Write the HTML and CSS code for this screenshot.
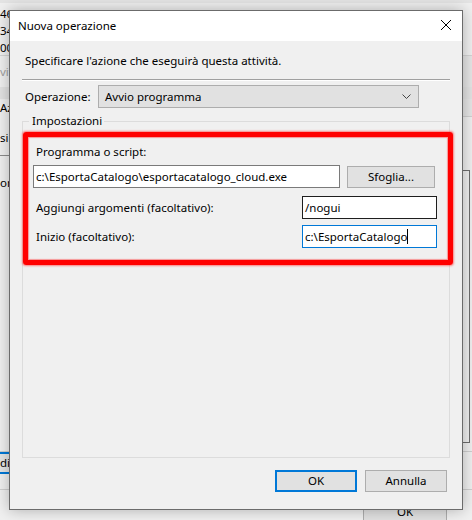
FILE: index.html
```html
<!DOCTYPE html>
<html lang="it">
<head>
    <meta charset="UTF-8">
    <meta name="viewport" content="width=device-width, initial-scale=1.0">
    <title>Nuova operazione</title>
    <link rel="stylesheet" href="styles.css">
</head>
<body>
    <!-- finestra sottostante (Utilità di pianificazione) -->
    <div class="backdrop">
        <div class="bg-band"></div>
        <div class="bg-row bg-first">46&nbsp;&nbsp;&nbsp;&nbsp;&nbsp;Alle 7:15 ogni giorno - Dopo l'attivazione, ripeti ogni 1 ora</div>
        <div class="bg-row">34</div>
        <div class="bg-row">00</div>
        <div class="bg-line"></div>
        <div class="bg-split bg-h31">
            <div class="bg-text bg-muted">vit</div>
            <div class="bg-edge bg-edge-gray"></div>
        </div>
        <div class="bg-band bg-h12"></div>
        <div class="bg-split bg-h18">
            <div class="bg-text">Az</div>
            <div class="bg-edge bg-edge-gray bg-edge-under"></div>
        </div>
        <div class="bg-split bg-h30">
            <div class="bg-text bg-bottom">si</div>
        </div>
        <div class="bg-gap9"></div>
        <div class="bg-line bg-line-dark"></div>
        <div class="bg-gap14"></div>
        <div class="bg-split bg-h277">
            <div class="bg-text bg-top">or</div>
            <div class="bg-box"></div>
        </div>
        <div class="bg-gap8 bg-rule"></div>
        <div class="bg-selected">di</div>
        <div class="bg-gap15 bg-rule"></div>
        <div class="bg-footer">
            <div class="bg-button">OK</div>
        </div>
    </div>

    <!-- finestra di dialogo -->
    <div class="dialog">
        <div class="titlebar">
            <span class="title">Nuova operazione</span>
            <svg class="close" width="12" height="12" viewBox="0 0 12 12">
                <path d="M1 1 L11 11 M11 1 L1 11" stroke="#000" stroke-width="1" fill="none"/>
            </svg>
        </div>

        <div class="dialog-body">
            <p class="intro">Specificare l'azione che eseguirà questa attività.</p>
            <div class="separator"></div>

            <div class="action-row">
                <span class="action-label">Operazione:</span>
                <div class="combo">
                    <span>Avvio programma</span>
                    <svg width="9" height="5" viewBox="0 0 9 5">
                        <path d="M0.5 0.5 L4.5 4.5 L8.5 0.5" stroke="#444" stroke-width="1" fill="none"/>
                    </svg>
                </div>
            </div>

            <fieldset class="group">
                <legend>Impostazioni</legend>

                <div class="highlight">
                    <div class="field-label">Programma o script:</div>
                    <div class="program-row">
                        <div class="textbox textbox-wide">c:\EsportaCatalogo\esportacatalogo_cloud.exe</div>
                        <div class="btn btn-browse">Sfoglia...</div>
                    </div>
                    <div class="param-row">
                        <span class="field-label">Aggiungi argomenti (facoltativo):</span>
                        <div class="textbox textbox-short textbox-hover">/nogui</div>
                    </div>
                    <div class="param-row">
                        <span class="field-label">Inizio (facoltativo):</span>
                        <div class="textbox textbox-short textbox-focus">c:\EsportaCatalogo<span class="caret"></span></div>
                    </div>
                </div>
            </fieldset>

            <div class="dialog-buttons">
                <div class="btn btn-default">OK</div>
                <div class="btn">Annulla</div>
            </div>
        </div>
    </div>
</body>
</html>
```

FILE: styles.css
```css
body {
    margin: 0;
    padding: 0;
    width: 472px;
    height: 520px;
    overflow: hidden;
    position: relative;
    background: #f0f0f0;
    color: #000;
    font-family: 'Noto Sans', 'Liberation Sans', sans-serif;
    font-size: 11.5px;
    line-height: 16px;
}

/* ---- finestra sottostante ---- */
.backdrop {
    display: flex;
    flex-direction: column;
    height: 520px;
}

.bg-band {
    height: 3px;
    background: #e4e4e4;
}

.bg-h12 {
    height: 12px;
    background: #e3e3e3;
}

.bg-row {
    height: 17px;
    line-height: 17px;
    white-space: nowrap;
    overflow: hidden;
}

.bg-first {
    margin-top: 2px;
}

.bg-line {
    height: 1px;
    background: #d4d4d4;
}

.bg-line-dark {
    background: #8c8c8c;
    margin-right: 10px;
}

.bg-split {
    display: flex;
    justify-content: space-between;
}

.bg-h31 { height: 31px; }
.bg-h18 { height: 18px; }
.bg-h30 { height: 30px; }
.bg-h277 { height: 277px; }
.bg-gap9 { height: 9px; }
.bg-gap14 { height: 14px; }
.bg-gap8 { height: 8px; }
.bg-gap15 { height: 15px; }

.bg-text {
    display: flex;
    align-items: center;
}

.bg-bottom {
    align-items: flex-end;
}

.bg-top {
    align-items: flex-start;
    padding-top: 5px;
}

.bg-muted {
    color: #a0a0a0;
}

.bg-edge {
    width: 10px;
}

.bg-edge-gray {
    background: #e6e6e6;
}

.bg-edge-under {
    border-bottom: 1px solid #d0d0d0;
}

.bg-box {
    width: 9px;
    margin-right: 2px;
    border: 1px solid #6e6e6e;
    border-left: none;
}

.bg-rule {
    border-bottom: 1px solid #cfcfcf;
}

.bg-selected {
    height: 18px;
    line-height: 18px;
    border-top: 2px solid #0078d7;
    border-bottom: 2px solid #0078d7;
    background: #e5e5e5;
    width: 40px;
}

.bg-footer {
    flex: 1;
    display: flex;
    justify-content: flex-end;
    padding-top: 6px;
    padding-right: 25px;
}

.bg-button {
    width: 82px;
    text-align: center;
    background: #e1e1e1;
    border: 1px solid #adadad;
    border-bottom: none;
    padding-top: 7px;
}

/* ---- finestra di dialogo ---- */
.dialog {
    position: absolute;
    top: 10px;
    left: 9px;
    width: 452px;
    height: 498px;
    border: 1px solid #6b6b6b;
    background: #f0f0f0;
    box-shadow: 0 0 14px rgba(0, 0, 0, 0.28);
    display: flex;
    flex-direction: column;
}

.titlebar {
    height: 30px;
    background: #fff;
    display: flex;
    align-items: center;
    justify-content: space-between;
    padding: 0 10px 0 8px;
}

.title {
    margin-top: -1px;
}

.close {
    margin-top: -2px;
}

.dialog-body {
    flex: 1;
    display: flex;
    flex-direction: column;
    padding: 0 12px 17px 12px;
}

.intro {
    margin: 12px 0 0 3px;
}

.separator {
    margin-top: 10px;
    height: 1px;
    background: #a0a0a0;
    border-bottom: 1px solid #fff;
}

.action-row {
    display: flex;
    align-items: center;
    margin-top: 4px;
    padding-left: 3px;
}

.action-label {
    width: 73px;
}

.combo {
    box-sizing: border-box;
    width: 321px;
    height: 23px;
    background: #e1e1e1;
    border: 1px solid #adadad;
    display: flex;
    align-items: center;
    justify-content: space-between;
    padding: 0 7px 0 6px;
}

.group {
    flex: 1;
    margin: 5px 0 0 0;
    padding: 0;
    border: 1px solid #dcdcdc;
    min-width: 0;
}

.group legend {
    margin-left: 6px;
    padding: 0 2px 0 3px;
    line-height: 16px;
}

.highlight {
    margin: 3px -4px 0 0;
    padding: 7px 11px 12px 5px;
    border: 5px solid #ff0000;
    border-radius: 3px;
    box-shadow: 0 0 2px 1px rgba(255, 40, 40, 0.55), inset 0 0 1px 1px rgba(255, 40, 40, 0.45);
    display: flex;
    flex-direction: column;
}

.field-label {
    padding-left: 3px;
}

.program-row {
    display: flex;
    gap: 7px;
    margin-top: 5px;
}

.param-row {
    display: flex;
    align-items: center;
    justify-content: space-between;
    margin-top: 8px;
}

.param-row + .param-row {
    margin-top: 6px;
}

.textbox {
    height: 23px;
    box-sizing: border-box;
    background: #fff;
    border: 1px solid #7a7a7a;
    padding: 0 2px;
    line-height: 21px;
    white-space: nowrap;
    overflow: hidden;
}

.textbox-wide {
    width: 307px;
}

.textbox-short {
    width: 135px;
}

.textbox-hover {
    border-color: #1e1e1e;
}

.textbox-focus {
    border-color: #0078d7;
}

.caret {
    display: inline-block;
    width: 1px;
    height: 15px;
    background: #000;
    vertical-align: -3px;
}

.btn {
    width: 82px;
    height: 22px;
    box-sizing: border-box;
    background: #e1e1e1;
    border: 1px solid #adadad;
    display: flex;
    align-items: center;
    justify-content: center;
}

.btn-browse {
    width: 88px;
    margin-top: 1px;
}

.btn-default {
    border: 2px solid #0078d7;
}

.dialog-buttons {
    display: flex;
    justify-content: flex-end;
    gap: 8px;
    margin-top: 12px;
    padding-right: 3px;
}
```
